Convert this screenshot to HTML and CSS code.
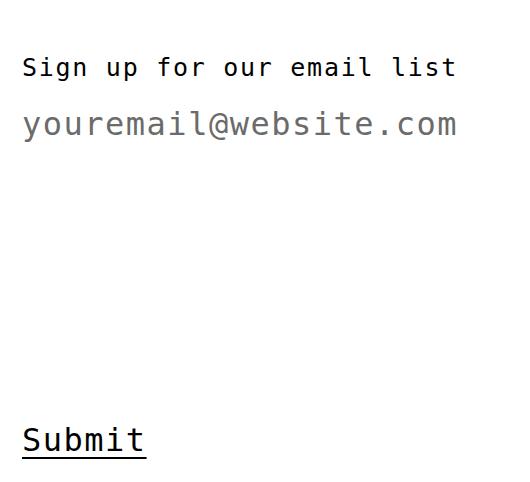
FILE: index.html
```html
<!DOCTYPE html>
<html>
<head>
<meta charset="utf-8">
<link rel="stylesheet" href="styles.css">
</head>
<body>
<form class="signup">
  <label class="label" for="email">Sign up for our email list</label>
  <input class="email" id="email" type="email" placeholder="youremail@website.com">
  <div class="spacer"></div>
  <button class="submit" type="button">Submit</button>
</form>
</body>
</html>
```
FILE: styles.css
```css
html, body {
  margin: 0;
  padding: 0;
  background: #fff;
}
.signup {
  box-sizing: border-box;
  height: 482px;
  display: flex;
  flex-direction: column;
  align-items: flex-start;
  padding: 52px 22px 22px;
  font-family: "DejaVu Sans Mono", "Liberation Mono", monospace;
}
.label {
  font-size: 25px;
  letter-spacing: 1.72px;
  line-height: 32px;
  color: #000;
}
.email {
  margin-top: 20px;
  font-family: inherit;
  font-size: 32px;
  letter-spacing: 1.5px;
  line-height: 40px;
  border: none;
  outline: none;
  padding: 0;
  width: 480px;
  color: #000;
  background: transparent;
}
.email::placeholder {
  color: #6b6b6b;
}
.spacer {
  flex: 1;
}
.submit {
  font-family: inherit;
  font-size: 32px;
  letter-spacing: 1.5px;
  line-height: 40px;
  border: none;
  background: none;
  padding: 0;
  color: #000;
  text-decoration: underline;
  text-decoration-thickness: 2px;
  text-underline-offset: 6px;
  cursor: pointer;
}
```
